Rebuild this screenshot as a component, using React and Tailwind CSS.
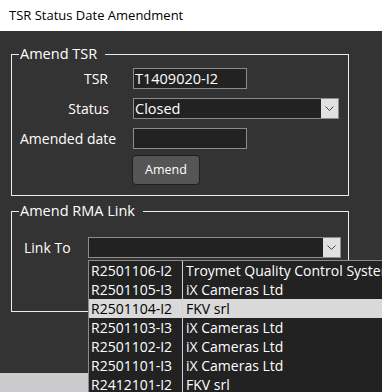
import React from "react";

const rows = [
  ["R2501106-I2", "Troymet Quality Control Systems"],
  ["R2501105-I3", "iX Cameras Ltd"],
  ["R2501104-I2", "FKV srl"],
  ["R2501103-I3", "iX Cameras Ltd"],
  ["R2501102-I2", "iX Cameras Ltd"],
  ["R2501101-I3", "iX Cameras Ltd"],
  ["R2412101-I2", "FKV srl"],
];

function Chevron() {
  return (
    <div className="w-[17px] h-full bg-[#e1e1e1] flex items-center justify-center">
      <svg width="9" height="5" viewBox="0 0 9 5" fill="none">
        <polyline points="0.5,0.5 4.5,4.5 8.5,0.5" stroke="#444" strokeWidth="1" />
      </svg>
    </div>
  );
}

export default function App() {
  const font = { fontFamily: '"Open Sans", "Noto Sans", sans-serif' };
  return (
    <div className="relative w-[382px] h-[392px] overflow-hidden bg-[#333333] text-white" style={font}>
      {/* title bar */}
      <div className="h-[31px] bg-white text-black text-[13px] flex items-center pl-[9px]">
        TSR Status Date Amendment
      </div>

      <div className="h-[342px] pl-[11px] pt-[13px]">
        {/* Amend TSR */}
        <fieldset className="w-[338px] border border-[#ececec]">
          <legend className="ml-[7px] pl-[1px] pr-[8px] text-[14.5px] leading-[20px]">Amend TSR</legend>
          <div className="flex flex-col gap-[9px] pt-[4px] text-[14px]">
            <div className="flex items-center h-[21px]">
              <div className="w-[121px] text-right pr-[25px]">TSR</div>
              <div className="w-[114px] h-[21px] bg-[#222] border border-[#8c8c8c] flex items-center pl-[1px] text-[14.5px]">
                T1409020-I2
              </div>
            </div>
            <div className="flex items-center h-[21px]">
              <div className="w-[121px] text-right pr-[24px]">Status</div>
              <div className="w-[206px] h-[21px] bg-[#222] border border-[#8c8c8c] flex items-center text-[14.5px]">
                <span className="flex-1 pl-[1px]">Closed</span>
                <Chevron />
              </div>
            </div>
            <div className="flex items-center h-[21px]">
              <div className="w-[121px] pl-[8px]">Amended date</div>
              <div className="w-[114px] h-[21px] bg-[#222] border border-[#8c8c8c]" />
            </div>
          </div>
          <div className="pl-[120px] pt-[6px] pb-[10px]">
            <button className="w-[68px] h-[30px] rounded-[4px] bg-[#555555] border border-[#1e1e1e] text-[12.5px] text-white">
              Amend
            </button>
          </div>
        </fieldset>

        {/* Amend RMA Link */}
        <fieldset className="w-[338px] mt-[5px] border border-[#ececec]">
          <legend className="ml-[7px] pl-[1px] pr-[8px] text-[14.5px] leading-[20px]">Amend RMA Link</legend>
          <div className="flex items-center pt-[16px] pb-[53px] text-[14px]">
            <div className="w-[76px] pl-[12px]">Link To</div>
            <div className="w-[253px] h-[21px] bg-[#222] border border-[#8c8c8c] flex items-center">
              <span className="flex-1" />
              <Chevron />
            </div>
          </div>
        </fieldset>
      </div>

      {/* status strip */}
      <div className="h-[19px] bg-[#cbcbcd]" />

      {/* open dropdown list */}
      <div className="absolute left-[88px] top-[260px] w-[300px] h-[140px] bg-[#222] border border-[#8c8c8c] text-[14px] leading-[19px]">
        {rows.map(([code, name], i) => (
          <div
            key={code}
            className={`flex h-[19px] whitespace-nowrap ${i === 2 ? "bg-[#d9d9d9] text-black" : "text-white"}`}
          >
            <div className="w-[94px] shrink-0 pl-[2px] border-r border-[#d0d0d0]">{code}</div>
            <div className="pl-[3px]">{name}</div>
          </div>
        ))}
      </div>
    </div>
  );
}
